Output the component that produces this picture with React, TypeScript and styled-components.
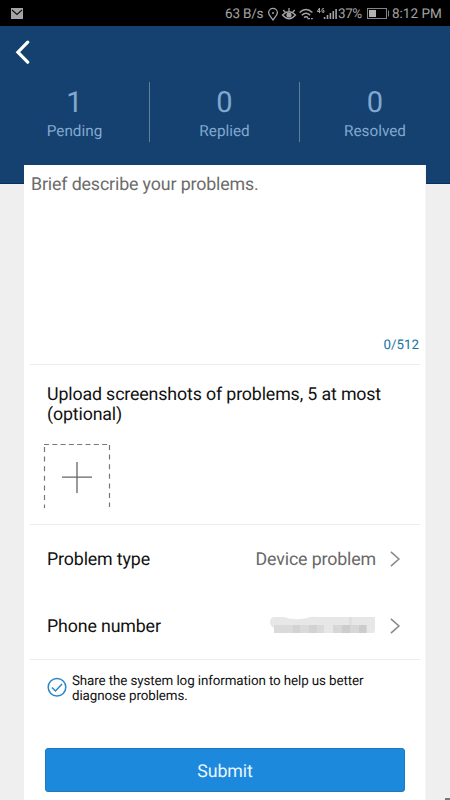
import React from "react";
import styled, { createGlobalStyle } from "styled-components";

const GlobalStyle = createGlobalStyle`
  * { box-sizing: border-box; }
  body {
    margin: 0;
    background: #efefef;
    font-family: Roboto, "Noto Sans", sans-serif;
    text-rendering: geometricPrecision;
  }
`;

const Screen = styled.div`
  width: 450px;
  height: 800px;
  overflow: hidden;
  position: relative;
  background: #efefef;
  display: flex;
  flex-direction: column;
`;

const StatusBar = styled.div`
  height: 26px;
  flex: none;
  background: #000;
  color: #a4a4a4;
  display: flex;
  align-items: center;
  padding: 1px 8px 0 11px;
  font-size: 13.5px;
  line-height: 26px;
  white-space: nowrap;
`;

const StatusText = styled.span<{ $width: number; $spacing?: number }>`
  width: ${(p) => p.$width}px;
  letter-spacing: ${(p) => p.$spacing ?? 0}px;
`;

const Glyph = styled.svg`
  display: block;
  flex: none;
`;

const Spacer = styled.div`
  flex: 1;
`;

const Header = styled.header`
  height: 158px;
  flex: none;
  background: #14416f;
  border-bottom: 1px solid #0c2f5c;
`;

const BackButton = styled.button`
  display: flex;
  align-items: flex-start;
  height: 56px;
  width: 46px;
  padding: 14px 0 0 15px;
  border: 0;
  background: none;
`;

const Stats = styled.div`
  display: grid;
  grid-template-columns: repeat(3, 1fr);
  height: 59px;
`;

const Stat = styled.div`
  display: flex;
  flex-direction: column;
  align-items: center;
  color: #82a8cf;
  border-right: 1px solid #5f8098;
  &:last-child { border-right: 0; }
`;

const StatValue = styled.div`
  font-size: 29px;
  line-height: 34px;
  height: 38px;
  padding-top: 4px;
`;

const StatLabel = styled.div`
  font-size: 15.3px;
  line-height: 22px;
`;

const Card = styled.main`
  width: 402px;
  flex: 1;
  margin: -19px 0 0 24px;
  background: #fff;
  border-right: 1px solid #f4f4f4;
  padding: 0 5px 0 6px;
  position: relative;
  display: flex;
  flex-direction: column;
`;

const Section = styled.section<{ $height: number }>`
  height: ${(p) => p.$height}px;
  flex: none;
  border-bottom: 1px solid #ececec;
`;

const Description = styled(Section)`
  display: flex;
  flex-direction: column;
  justify-content: space-between;
  padding: 9px 1px 8px;
`;

const Placeholder = styled.div`
  color: #6b6b6b;
  font-size: 17.8px;
  line-height: 22px;
  letter-spacing: -0.13px;
`;

const Counter = styled.div`
  align-self: flex-end;
  color: #16769f;
  font-size: 13.3px;
  line-height: 20px;
`;

const Upload = styled(Section)`
  padding: 20px 0 0 17px;
`;

const UploadTitle = styled.div`
  color: #111;
  font-size: 17.8px;
  line-height: 20px;
  height: 56px;
  white-space: nowrap;
  letter-spacing: -0.14px;
`;

const AddPicture = styled.button`
  display: block;
  border: 0;
  background: none;
  padding: 1px 0 0;
  margin-left: -4px;
`;

const Details = styled(Section)`
  padding: 0 19px 0 17px;
`;

const Row = styled.div`
  height: 67px;
  display: flex;
  align-items: center;
`;

const RowLabel = styled.div`
  flex: 1;
  color: #111;
  font-size: 17.8px;
  letter-spacing: -0.14px;
  padding-top: 2px;
`;

const RowValue = styled.div`
  color: #686868;
  font-size: 17.8px;
  letter-spacing: -0.14px;
  padding-top: 2px;
  margin-right: 14px;
`;

const Consent = styled.label`
  display: flex;
  padding: 13px 0 0 17px;
  height: 88px;
  flex: none;
`;

const ConsentText = styled.div`
  color: #111;
  font-size: 13.4px;
  line-height: 15px;
  letter-spacing: -0.11px;
  padding-top: 1px;
  margin-left: 5px;
  white-space: nowrap;
`;

const Submit = styled.button`
  height: 44px;
  flex: none;
  width: 360px;
  margin-left: 15px;
  border: 1px solid #1a7bc0;
  border-radius: 3px;
  background: #1c89dc;
  color: #e8f6ff;
  font: 17.8px Roboto, sans-serif;
  text-rendering: geometricPrecision;
  letter-spacing: -0.1px;
  padding: 3px 0 0;
`;

const CornerMark = styled.div`
  position: absolute;
  right: 0;
  bottom: 0;
  width: 5px;
  height: 2px;
  background: #777;
`;

const Chevron = () => (
  <Glyph width="11" height="18" viewBox="0 0 11 18" fill="none" stroke="#8b8b8b" strokeWidth="1.6">
    <path d="M0.9 1.8 L8.9 9 L0.9 16.2" />
  </Glyph>
);

const Indicators = () => (
  <Glyph width="71" height="18" viewBox="267 4 71 18" fill="none" stroke="#a4a4a4" strokeWidth="1.3">
    <path d="M273 19 C271 16 268.6 14 268.6 11.8 A4.4 4.4 0 0 1 277.4 11.8 C277.4 14 275 16 273 19Z" />
    <circle cx="273" cy="12" r="1" fill="#a4a4a4" stroke="none" />
    <path d="M282.5 14 Q289 7.5 295.5 14 Q289 21.5 282.5 14Z" />
    <circle cx="289" cy="14" r="2.6" fill="#a4a4a4" stroke="none" />
    <path d="M289 7 V10 M283.2 9 L285.3 11.2 M294.8 9 L292.7 11.2" />
    <path d="M299.6 11.5 Q306 5.5 312.4 11.5 M301.8 14.2 Q306 10.2 310.2 14.2 M304 16.6 Q306 14.8 308 16.6" strokeWidth="1.5" />
    <path d="M307.5 17.7 H310 M311 17.7 H312.8" />
    <path d="M319.5 7 L317.3 10.5 H320.5 M319.5 7 V12 M324 7.6 Q321.8 7 321.8 9.5 Q321.8 12 324 11.3 V9.6 H322.8" strokeWidth="1" />
    <path d="M324.6 18 V16 M327.5 18 V14 M330.4 18 V12 M333.3 18 V10 M336.1 18 V8" strokeWidth="1.6" />
  </Glyph>
);

/* Masked phone number: uneven brush shape over a row of grey tiles. */
const MaskedNumber = () => (
  <Glyph width="107" height="22" viewBox="0 0 107 22">
    <path d="M6 1 Q1 1 1 6 Q1 10 5 12 L5 17 H105 L106 14 V1 H50 Q42 0 38 2 Q25 5 15 1Z" fill="#e7e7e7" />
    <path d="M5 9 H55 V17 H5Z" fill="#dadada" />
    <path d="M24 9 H31 V17 H24Z M40 9 H48 V17 H40Z" fill="#d2d2d2" />
    <path d="M64 9 H98 V17 H64Z" fill="#d7d7d7" />
    <path d="M73 9 H81 V17 H73Z M90 9 H97 V17 H90Z" fill="#cccccc" />
    <path d="M80 1 H83 V9 H80Z" fill="#dfdfdf" />
  </Glyph>
);

export default function App() {
  return (
    <Screen>
      <GlobalStyle />
      <StatusBar>
        <Glyph width="12" height="11" viewBox="0 0 12 11">
          <rect width="12" height="11" fill="#a4a4a4" />
          <path d="M1 2 L6 6.5 L11 2" fill="none" stroke="#111" strokeWidth="1.1" />
        </Glyph>
        <Spacer />
        <StatusText $width={42} $spacing={-0.2}>63 B/s</StatusText>
        <Indicators />
        <StatusText $width={29} $spacing={-0.4}>37%</StatusText>
        <Glyph width="25" height="11" viewBox="0 0 25 11">
          <rect x="0.5" y="0.5" width="19" height="10" fill="none" stroke="#858585" />
          <rect x="2" y="2" width="7" height="7" fill="#b3b3b3" />
          <path d="M21.5 2.5 V8.5" stroke="#858585" />
        </Glyph>
        <StatusText $width={50}>8:12 PM</StatusText>
      </StatusBar>
      <Header>
        <BackButton aria-label="Back">
          <Glyph width="16" height="26" viewBox="0 0 16 26" fill="none" stroke="#fff" strokeWidth="3.2">
            <path d="M12.7 2.2 L2.9 12.2 L12.7 22.2" strokeLinecap="round" />
          </Glyph>
        </BackButton>
        <Stats>
          <Stat><StatValue>1</StatValue><StatLabel>Pending</StatLabel></Stat>
          <Stat><StatValue>0</StatValue><StatLabel>Replied</StatLabel></Stat>
          <Stat><StatValue>0</StatValue><StatLabel>Resolved</StatLabel></Stat>
        </Stats>
      </Header>
      <Card>
        <Description $height={200}>
          <Placeholder>Brief describe your problems.</Placeholder>
          <Counter>0/512</Counter>
        </Description>
        <Upload $height={160}>
          <UploadTitle>Upload screenshots of problems, 5 at most<br />(optional)</UploadTitle>
          <AddPicture aria-label="Add screenshot">
            <Glyph width="68" height="66" viewBox="0 0 68 66" fill="none" stroke="#777" strokeWidth="1.2">
              <path d="M1 2.5 H67" strokeDasharray="5 3.3" />
              <path d="M1.5 5 V66 M66.5 3 V65" strokeDasharray="5 4.6" />
              <path d="M19 35.2 H49 M34 20 V51" stroke="#666" strokeWidth="1.3" />
            </Glyph>
          </AddPicture>
        </Upload>
        <Details $height={135}>
          <Row><RowLabel>Problem type</RowLabel><RowValue>Device problem</RowValue><Chevron /></Row>
          <Row><RowLabel>Phone number</RowLabel><RowValue><MaskedNumber /></RowValue><Chevron /></Row>
        </Details>
        <Consent>
          <Glyph width="20" height="28" viewBox="0 0 20 28" fill="none" stroke="#2b86c8" strokeWidth="1.5">
            <circle cx="10" cy="14.2" r="8.8" />
            <path d="M5 14.5 L8.5 18 L15 11" />
          </Glyph>
          <ConsentText>Share the system log information to help us better<br />diagnose problems.</ConsentText>
        </Consent>
        <Submit>Submit</Submit>
      </Card>
      <CornerMark />
    </Screen>
  );
}
